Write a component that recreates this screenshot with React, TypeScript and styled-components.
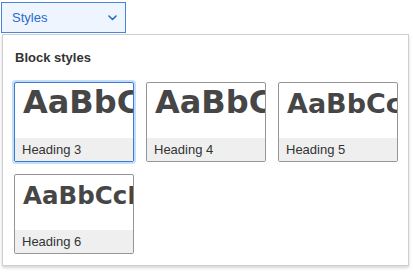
import React from "react";
import styled, { createGlobalStyle } from "styled-components";

const Global = createGlobalStyle`
  html, body { margin: 0; padding: 0; }
  body {
    width: 413px;
    height: 275px;
    overflow: hidden;
    background: #f3f7fd;
    font-family: "Liberation Sans", Arial, sans-serif;
  }
`;

const Page = styled.div`
  display: flex;
  flex-direction: column;
  width: 413px;
  height: 275px;
`;

const Toolbar = styled.div`
  height: 34px;
  background: #ffffff;
  padding: 2px 0 0 1px;
  box-sizing: border-box;
`;

const DropButton = styled.button`
  display: flex;
  align-items: center;
  justify-content: space-between;
  width: 125px;
  height: 31px;
  box-sizing: border-box;
  margin: 0;
  padding: 0 8px 0 10px;
  border: 1px solid #4a84d4;
  background: #eef5fe;
  color: #2a6acd;
  font-family: "Liberation Sans", Arial, sans-serif;
  font-size: 13px;
  cursor: pointer;
`;

const Backdrop = styled.div`
  display: flex;
  background: #ffffff;
  padding: 0 4px 9px 2px;
`;

const Panel = styled.div`
  width: 407px;
  box-sizing: border-box;
  background: #ffffff;
  border: 1px solid #cfcfcf;
  box-shadow: 0 2px 3px rgba(0, 0, 0, 0.16);
  padding: 15px 11px 11px 11px;
`;

const Title = styled.div`
  font-size: 13px;
  line-height: 16px;
  font-weight: bold;
  color: #333333;
  padding-left: 1px;
  margin-bottom: 16px;
`;

const Grid = styled.div`
  display: grid;
  grid-template-columns: repeat(3, 120px);
  grid-auto-rows: 80px;
  column-gap: 12px;
  row-gap: 12px;
`;

const Tile = styled.div<{ $active?: boolean }>`
  display: flex;
  flex-direction: column;
  box-sizing: border-box;
  border: 1px solid ${(p) => (p.$active ? "#3a7bd5" : "#959595")};
  border-radius: 2px;
  box-shadow: ${(p) => (p.$active ? "0 0 0 2px #c6ddf8" : "none")};
  overflow: hidden;
  background: #ffffff;
`;

const Preview = styled.div<{ $size: number }>`
  flex: 1;
  overflow: hidden;
  white-space: nowrap;
  padding-left: 8px;
  padding-top: ${(p) => 30 - 0.846 * p.$size}px;
  font-family: "DejaVu Sans", "Liberation Sans", sans-serif;
  font-weight: bold;
  font-size: ${(p) => p.$size}px;
  line-height: 1;
  color: #464646;
  box-sizing: border-box;
`;

const Label = styled.div`
  height: 23px;
  line-height: 23px;
  background: #efefef;
  color: #333333;
  font-size: 13px;
  padding-left: 7px;
  white-space: nowrap;
`;

const Rest = styled.div`
  flex: 1;
  background: #f3f7fd;
`;

const Chevron = () => (
  <svg width="9" height="6" viewBox="0 0 9 6" fill="none">
    <path d="M1 1l3.5 3.5L8 1" stroke="#2a6acd" strokeWidth="1.6" strokeLinecap="round" strokeLinejoin="round" />
  </svg>
);

const styles = [
  { name: "Heading 3", sample: "AaBbCcDdEe", size: 32, active: true },
  { name: "Heading 4", sample: "AaBbCcDdEe", size: 32 },
  { name: "Heading 5", sample: "AaBbCcDdEe", size: 27 },
  { name: "Heading 6", sample: "AaBbCcDdEe", size: 24.5 },
];

export default function App() {
  return (
    <Page>
      <Global />
      <Toolbar>
        <DropButton>
          <span>Styles</span>
          <Chevron />
        </DropButton>
      </Toolbar>
      <Backdrop>
        <Panel>
          <Title>Block styles</Title>
          <Grid>
            {styles.map((s) => (
              <Tile key={s.name} $active={s.active}>
                <Preview $size={s.size}>{s.sample}</Preview>
                <Label>{s.name}</Label>
              </Tile>
            ))}
          </Grid>
        </Panel>
      </Backdrop>
      <Rest />
    </Page>
  );
}
